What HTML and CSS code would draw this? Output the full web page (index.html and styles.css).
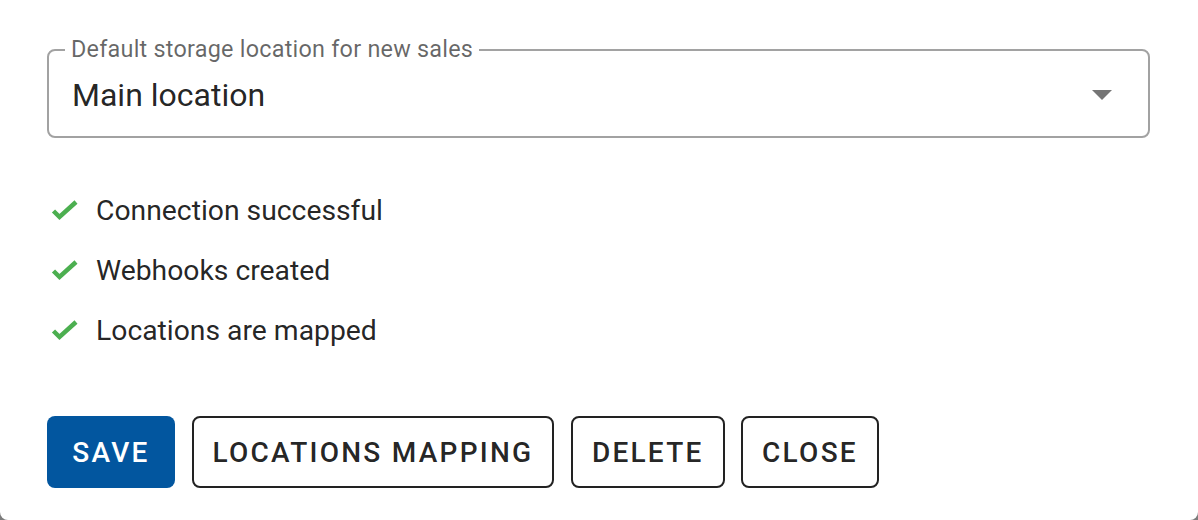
FILE: index.html
```html
<!DOCTYPE html>
<html lang="en">
<head>
<meta charset="utf-8">
<title>Storage settings</title>
<link rel="stylesheet" href="styles.css">
</head>
<body>
<div class="dialog">
  <div class="select">
    <span class="select-label">Default storage location for new sales</span>
    <span class="select-value">Main location</span>
    <svg class="select-arrow" viewBox="0 0 24 24" aria-hidden="true"><path d="M7 10l5 5 5-5z"/></svg>
  </div>

  <ul class="checks">
    <li class="check-row">
      <svg class="check-icon" viewBox="0 0 32 32" aria-hidden="true"><polyline points="6.5,17 12.5,23 29,8"/></svg>
      <span>Connection successful</span>
    </li>
    <li class="check-row">
      <svg class="check-icon" viewBox="0 0 32 32" aria-hidden="true"><polyline points="6.5,17 12.5,23 29,8"/></svg>
      <span>Webhooks created</span>
    </li>
    <li class="check-row">
      <svg class="check-icon" viewBox="0 0 32 32" aria-hidden="true"><polyline points="6.5,17 12.5,23 29,8"/></svg>
      <span>Locations are mapped</span>
    </li>
  </ul>

  <div class="actions">
    <button class="btn btn-primary">Save</button>
    <button class="btn btn-outlined">Locations mapping</button>
    <button class="btn btn-outlined">Delete</button>
    <button class="btn btn-outlined">Close</button>
  </div>
</div>
</body>
</html>
```

FILE: styles.css
```css
html, body {
  margin: 0;
  padding: 0;
}

body {
  background: #7c7c7c;
  font-family: Roboto, "Liberation Sans", Arial, sans-serif;
  color: rgba(0, 0, 0, 0.87);
}

.dialog {
  width: 1198px;
  height: 520px;
  box-sizing: border-box;
  background: #ffffff;
  border-radius: 0 0 8px 8px;
  padding: 49px 48px 0 47px;
}

.select {
  position: relative;
  height: 89px;
  box-sizing: border-box;
  border: 2px solid #a2a2a2;
  border-radius: 8px;
  display: flex;
  align-items: center;
  padding: 0 24px 0 23px;
}

.select-label {
  position: absolute;
  top: -17px;
  left: 16px;
  padding: 0 6px;
  background: #ffffff;
  font-size: 23.4px;
  line-height: 30px;
  color: rgba(0, 0, 0, 0.6);
  letter-spacing: 0.01em;
}

.select-value {
  flex: 1;
  font-size: 32px;
  line-height: 40px;
  margin-top: 2px;
  color: rgba(0, 0, 0, 0.87);
}

.select-arrow {
  width: 48px;
  height: 48px;
  fill: rgba(0, 0, 0, 0.54);
  margin-right: -2px;
}

.checks {
  list-style: none;
  margin: 0;
  padding: 0;
  margin-top: 56px;
  display: flex;
  flex-direction: column;
  gap: 28px;
}

.check-row {
  display: flex;
  align-items: center;
  height: 32px;
  font-size: 28.3px;
  color: rgba(0, 0, 0, 0.87);
}

.check-icon {
  width: 32px;
  height: 32px;
  fill: none;
  stroke: #4caf50;
  stroke-width: 4.5;
  margin-right: 17px;
  flex: none;
}

.actions {
  display: flex;
  gap: 16.5px;
  margin-top: 70px;
}

.btn {
  height: 72px;
  min-width: 128px;
  box-sizing: border-box;
  border-radius: 8px;
  font-family: Roboto, "Liberation Sans", Arial, sans-serif;
  font-weight: 500;
  font-size: 28px;
  letter-spacing: 2.25px;
  text-transform: uppercase;
  padding: 0 19px;
  cursor: pointer;
}

.btn-primary {
  background: #02569f;
  color: #ffffff;
  border: none;
  padding: 0 21px;
}

.btn-outlined {
  background: #ffffff;
  color: rgba(0, 0, 0, 0.87);
  border: 2px solid #222222;
}
```
